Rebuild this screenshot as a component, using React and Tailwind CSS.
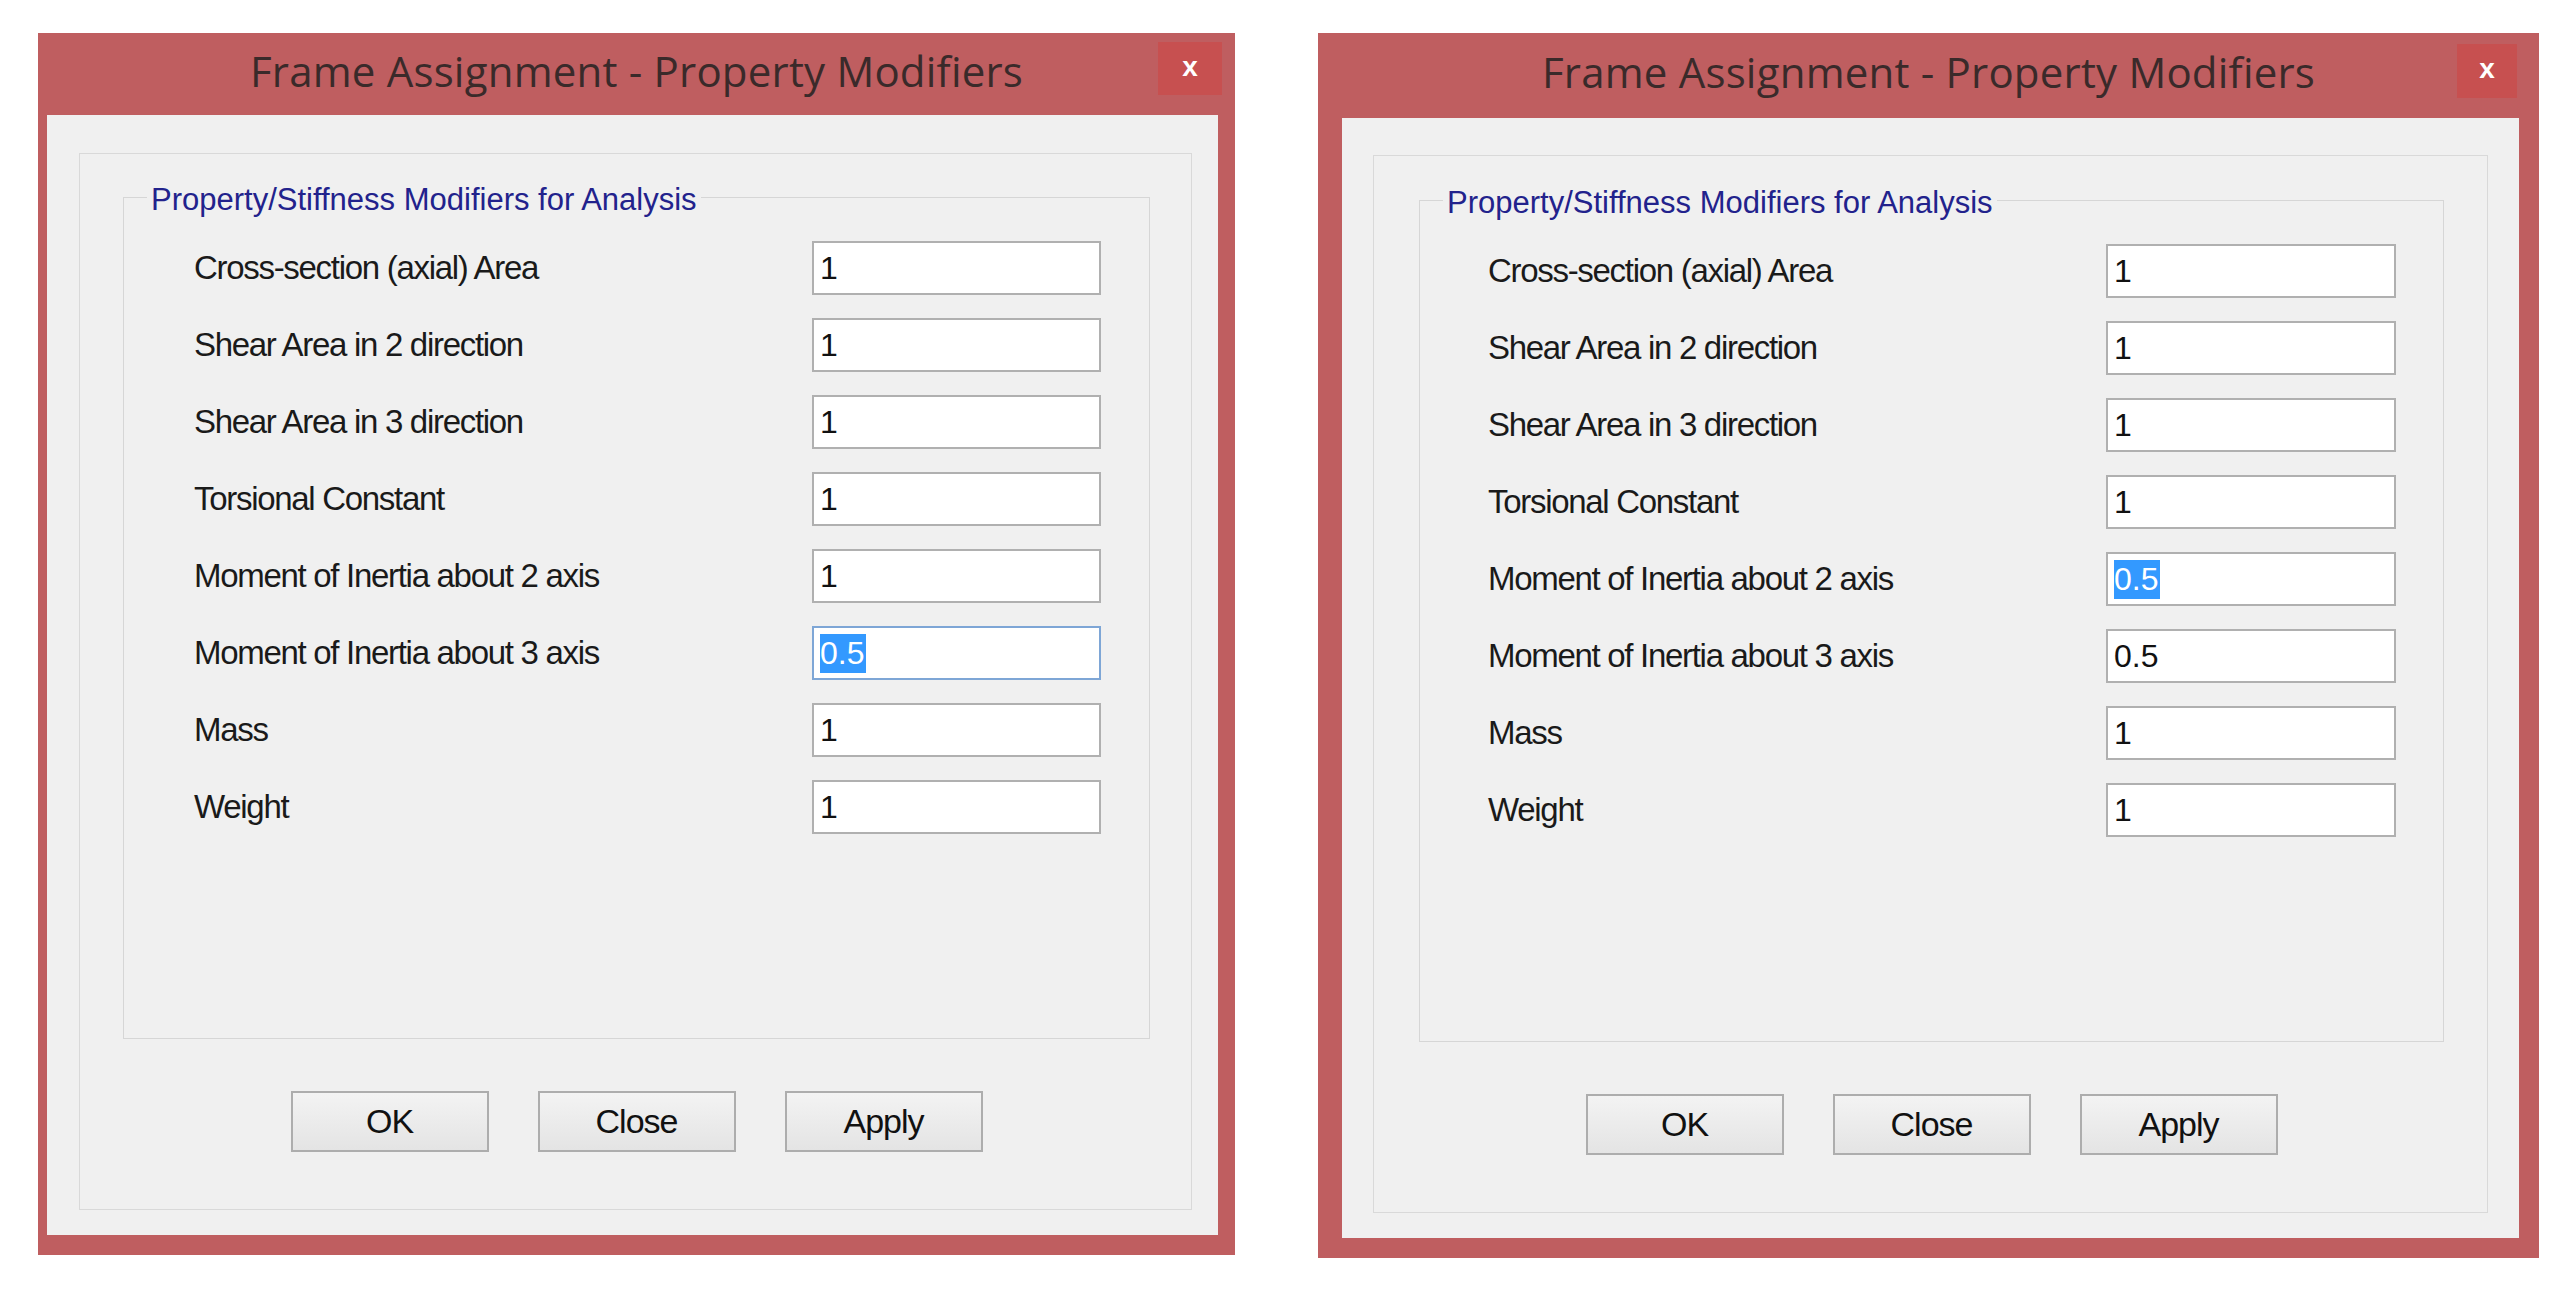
import React from 'react';

const labels = [
  'Cross-section (axial) Area',
  'Shear Area in 2 direction',
  'Shear Area in 3 direction',
  'Torsional Constant',
  'Moment of Inertia about 2 axis',
  'Moment of Inertia about 3 axis',
  'Mass',
  'Weight',
];

const dialogs = [
  {
    frame: 'w-[1197px] h-[1222px]',
    titleBar: 'h-[82px]',
    close: 'right-[13px] top-[9px] w-[64px] h-[53px]',
    body: 'ml-[9px] mr-[17px] mb-[20px] pt-[38px] pl-[32px] pr-[26px] pb-[25px]',
    group: 'pl-[43px] pr-[41px] pt-[43px]',
    fieldset: 'pl-[70px] pr-[48px] pt-[43px]',
    input: 'w-[289px]',
    values: ['1', '1', '1', '1', '1', '0.5', '1', '1'],
    selected: 5,
    focused: 5,
  },
  {
    frame: 'w-[1221px] h-[1225px]',
    titleBar: 'h-[85px]',
    close: 'right-[22px] top-[11px] w-[60px] h-[54px]',
    body: 'ml-[24px] mr-[20px] mb-[20px] pt-[37px] pl-[31px] pr-[31px] pb-[25px]',
    group: 'pl-[45px] pr-[43px] pt-[44px]',
    fieldset: 'pl-[68px] pr-[47px] pt-[43px]',
    input: 'w-[290px]',
    values: ['1', '1', '1', '1', '0.5', '0.5', '1', '1'],
    selected: 4,
    focused: -1,
  },
];

const EditBox = ({ value, width, selected, focused }) => (
  <div
    className={`${width} h-[54px] bg-white border-2 flex items-center pl-[6px] text-[32px] text-[#111] ${
      focused ? 'border-[#7ea6d6]' : 'border-[#b0b0b0]'
    }`}
  >
    {selected ? (
      <span className="bg-[#3399ff] text-white leading-[39px] pr-[2px]">{value}</span>
    ) : (
      <span className="leading-[39px]">{value}</span>
    )}
  </div>
);

const Dialog = ({ d }) => (
  <div className={`${d.frame} bg-[#bf5e60] flex flex-col shrink-0`}>
    {/* title bar */}
    <div className={`${d.titleBar} relative flex items-center justify-center pb-[8px]`}>
      <span className="text-[42px] text-[#3a2a2a] font-['Open_Sans',sans-serif] tracking-[0.2px]">
        Frame Assignment - Property Modifiers
      </span>
      <div className={`absolute ${d.close} bg-[#c75050] flex items-center justify-center`}>
        <span className="text-white font-bold text-[28px] leading-none pb-[4px]">x</span>
      </div>
    </div>

    <div className={`flex-1 flex flex-col bg-[#f0f0f0] ${d.body}`}>
      <div className={`flex-1 flex flex-col border border-[#d9d9d9] ${d.group}`}>
        <div className={`relative h-[842px] border border-[#d6d6d6] flex flex-col gap-[23px] ${d.fieldset}`}>
          <span className="absolute left-[23px] top-[-15px] px-[4px] bg-[#f0f0f0] text-[31px] leading-[34px] text-[#22228c]">
            Property/Stiffness Modifiers for Analysis
          </span>
          {labels.map((label, i) => (
            <div key={label} className="h-[54px] flex items-center justify-between">
              <span className="text-[33px] tracking-[-1.3px] text-[#1a1a1a]">{label}</span>
              <EditBox
                value={d.values[i]}
                width={d.input}
                selected={d.selected === i}
                focused={d.focused === i}
              />
            </div>
          ))}
        </div>

        <div className="mt-[52px] flex justify-center gap-[49px]">
          {['OK', 'Close', 'Apply'].map((b) => (
            <div
              key={b}
              className="w-[198px] h-[61px] border-2 border-[#adadad] bg-linear-to-b from-[#f3f3f3] to-[#e4e4e4] flex items-center justify-center text-[34px] tracking-[-1px] text-[#111]"
            >
              {b}
            </div>
          ))}
        </div>
      </div>
    </div>
  </div>
);

export default function App() {
  return (
    <div className="w-[2560px] h-[1289px] bg-white flex items-start pt-[33px] pl-[38px] gap-[83px] overflow-hidden font-['Liberation_Sans',Arial,sans-serif]">
      {dialogs.map((d, i) => (
        <Dialog key={i} d={d} />
      ))}
    </div>
  );
}
